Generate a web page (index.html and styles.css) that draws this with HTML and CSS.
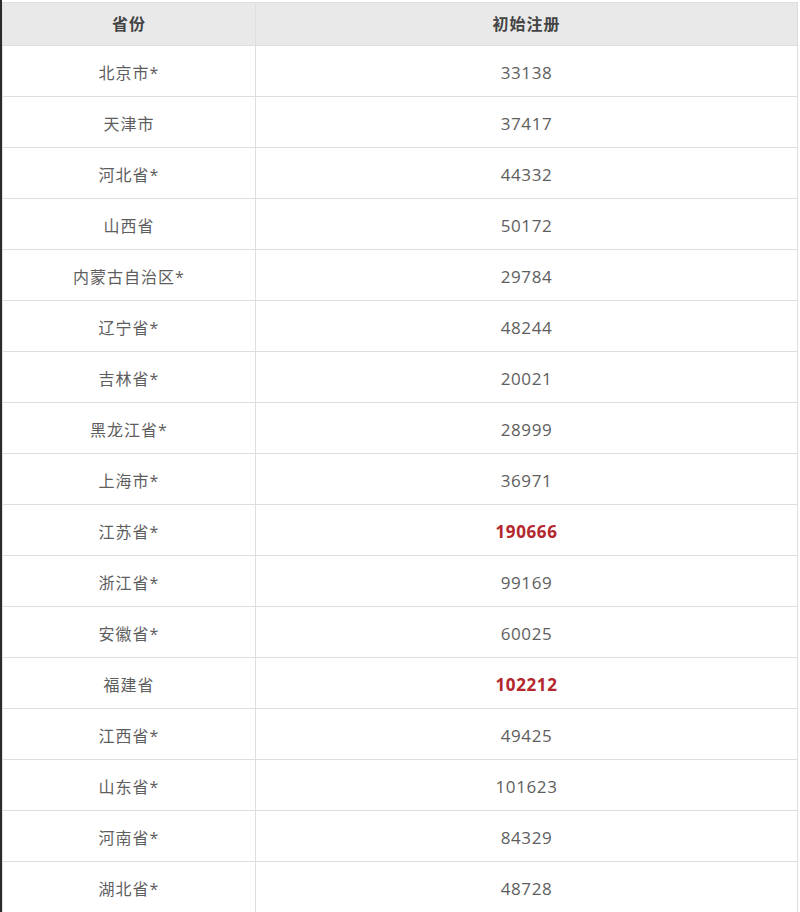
FILE: index.html
```html
<!DOCTYPE html>
<html lang="zh">
<head>
<meta charset="utf-8">
<link rel="stylesheet" href="styles.css">
</head>
<body>
<div class="page">
<table class="data">
<thead>
<tr><th class="c1">省份</th><th class="c2">初始注册</th></tr>
</thead>
<tbody>
<tr><td>北京市*</td><td class="num">33138</td></tr>
<tr><td>天津市</td><td class="num">37417</td></tr>
<tr><td>河北省*</td><td class="num">44332</td></tr>
<tr><td>山西省</td><td class="num">50172</td></tr>
<tr><td>内蒙古自治区*</td><td class="num">29784</td></tr>
<tr><td>辽宁省*</td><td class="num">48244</td></tr>
<tr><td>吉林省*</td><td class="num">20021</td></tr>
<tr><td>黑龙江省*</td><td class="num">28999</td></tr>
<tr><td>上海市*</td><td class="num">36971</td></tr>
<tr><td>江苏省*</td><td class="num hot">190666</td></tr>
<tr><td>浙江省*</td><td class="num">99169</td></tr>
<tr><td>安徽省*</td><td class="num">60025</td></tr>
<tr><td>福建省</td><td class="num hot">102212</td></tr>
<tr><td>江西省*</td><td class="num">49425</td></tr>
<tr><td>山东省*</td><td class="num">101623</td></tr>
<tr><td>河南省*</td><td class="num">84329</td></tr>
<tr><td>湖北省*</td><td class="num">48728</td></tr>
</tbody>
</table>
</div>
</body>
</html>
```
FILE: styles.css
```css
html, body {
  margin: 0;
  padding: 0;
  background: #ffffff;
}
.page {
  border-left: 2px solid #2b2b2b;
  padding-top: 2px;
  width: 796px;
}
.data {
  border-collapse: collapse;
  width: 796px;
  font-family: "Open Sans", "Noto Sans CJK SC", sans-serif;
  font-size: 16px;
  letter-spacing: 1px;
  color: #5e5e5e;
}
.data th, .data td {
  border: 1px solid #dedede;
  text-align: center;
  padding: 2px 0 0 0;
}
.data th {
  background: #e9e9e9;
  height: 40px;
  font-weight: bold;
  color: #444444;
  padding: 0 0 2px 0;
}
.data td {
  height: 48px;
}
.c1 { width: 252px; }
.num {
  font-family: "Open Sans", sans-serif;
  font-size: 17px;
  letter-spacing: 0.6px;
}
.hot {
  color: #b3272d;
  font-weight: bold;
}
```
